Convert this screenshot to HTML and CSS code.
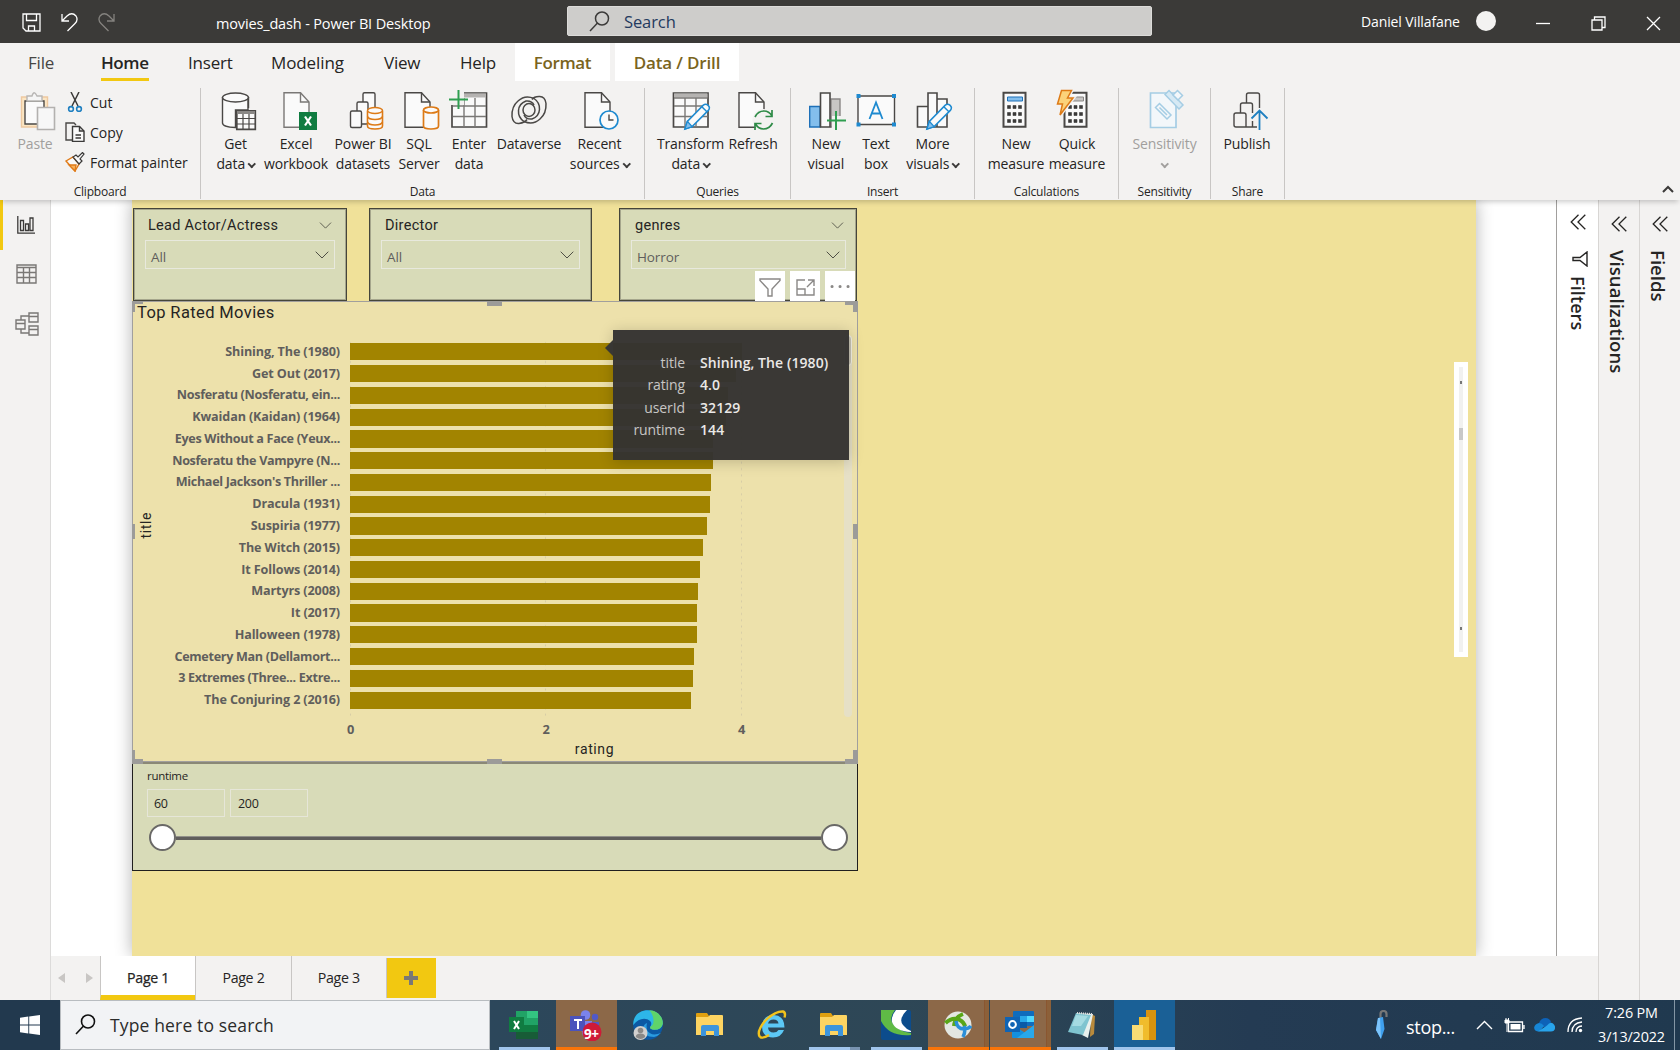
FILE: index.html
```html
<!DOCTYPE html>
<html lang="en">
<head>
<meta charset="utf-8">
<title>movies_dash - Power BI Desktop</title>
<link rel="stylesheet" href="styles.css">
</head>
<body>
<svg class="defs" width="0" height="0">
  <defs>
    <symbol id="doc" viewBox="0 0 48 44"><path d="M1 4.7h16.5l8.5 9.3v25.3H1z" fill="#fafafa"/><path d="M17.5 4.7V14H26" /></symbol>
    <symbol id="pencil" viewBox="0 0 30 30"><path d="M2 28l2.5-8L21 3.200q2.500-2 5 .3t.2 5.200L9.500 25.500z" fill="#fafafa" stroke="#1e8ad0" stroke-width="1.600"/><path d="M2 28l2.500-8 5 5.500z" fill="#83beec" stroke="#1e8ad0" stroke-width="1.300"/><path d="M19.500 5l5.200 5.200" stroke="#1e8ad0" stroke-width="1.500"/></symbol>
    <symbol id="chev" viewBox="0 0 14 8"><path d="M.7.7L7 7 13.300.7" fill="none" stroke="#4f4f45" stroke-width="1"/></symbol>
    <symbol id="dbl" viewBox="0 0 16 16"><path d="M8.500.7L1.200 8l7.300 7.300M15.300.7L8 8l7.300 7.300" fill="none" stroke="#252423" stroke-width="1.300"/></symbol>
    <symbol id="folder" viewBox="0 0 30 26"><path d="M1 2q0-1 1-1h10l2 3h14v19H1z" fill="#e0a010"/><path d="M1 5h12l2-2h12q1 0 1 1v19H1z" fill="#fdd462"/><path d="M6 24V15q0-2 2-2h14q2 0 2 2v9h-5v-5h-8v5z" fill="#3d95dc"/></symbol>
    <symbol id="calc" viewBox="0 0 26 38"><path d="M1.500 1.700h22v34h-22z" fill="#fafafa" stroke="#4a4846" stroke-width="2"/><path d="M5.500 14.500h3v3h-3zm5.500 0h3v3h-3zm5.500 0h3v3h-3zM5.500 21.500h3v3h-3zm5.500 0h3v3h-3zm5.500 0h3v3h-3zM5.500 28.500h3v3h-3zm5.500 0h3v3h-3zm5.500 0h3v3h-3z" fill="#3b3a39" stroke="#3b3a39" stroke-width=".6"/></symbol>
  </defs>
</svg>

<div class="app">
<header class="titlebar">
  <div class="quick">
    <svg width="19" height="19" viewBox="0 0 19 19"><path d="M1 1h17v17H4l-3-3zM4.500 1v6.500h10V1M6.500 18v-5h6v5" /></svg>
    <svg width="17" height="19" viewBox="0 0 17 19"><path d="M1 1v7h7M1.500 7.500L6 3q5-4.500 9 0 2.500 4-1 7.500L6.500 18" /></svg>
    <svg class="off" width="17" height="19" viewBox="0 0 17 19"><path d="M16 1v7H9M15.500 7.500L11 3q-5-4.500-9 0-2.500 4 1 7.500l7.500 7.500" /></svg>
  </div>
  <div class="doc-title">movies_dash - Power BI Desktop</div>
  <div class="search">
    <svg width="21" height="21" viewBox="0 0 21 21"><circle cx="13" cy="7.500" r="6.500"/><path d="M8.500 12L1 20"/></svg>
    <span>Search</span>
  </div>
  <div class="user">Daniel Villafane</div>
  <div class="avatar"></div>
  <div class="window-btns">
    <svg width="15" height="15" viewBox="0 0 15 15"><path d="M0 7.500h14"/></svg>
    <svg width="15" height="15" viewBox="0 0 15 15"><path d="M1 4h10v10H1zM3.500 4V1H14v10.500h-3"/></svg>
    <svg width="15" height="15" viewBox="0 0 15 15"><path d="M1 1l13 13M14 1L1 14"/></svg>
  </div>
</header>

<nav class="tabs">
  <span class="tab file">File</span>
  <span class="tab home">Home</span>
  <span class="tab insert">Insert</span>
  <span class="tab modeling">Modeling</span>
  <span class="tab view">View</span>
  <span class="tab help">Help</span>
  <span class="tab ctx format">Format</span>
  <span class="tab ctx drill">Data / Drill</span>
</nav>

<section class="ribbon">
  <div class="group g-clip">
    <div class="items">
      <div class="cmd paste"><svg viewBox="0 0 48 44"><path d="M10.500 9h26v30h-26z" fill="#fbe6c4" stroke="#eec9a0"/><path d="M14 13h19v23H14z" fill="#fafafa"/><path d="M16 13V8h5q2-6.500 5 0h5v5z" fill="#f5f5f5" stroke="#b8b6b4"/><path d="M26.500 19.500h17v22h-17z" fill="#f7f7f7" stroke="#b3b1af" stroke-width="1.600"/></svg><span>Paste</span></div>
      <div class="clip-list">
        <div><svg viewBox="0 0 20 20"><path d="M6 0l7 14M14 0L7 14" stroke="#3b3a39" stroke-width="1.500"/><g stroke="#1e7fc0" stroke-width="1.600"><circle cx="6" cy="17" r="2.400"/><circle cx="14" cy="17" r="2.400"/></g></svg><span>Cut</span></div>
        <div><svg viewBox="0 0 20 20"><path d="M7 18H1V1h8l2 2" stroke="#4a4846" stroke-width="1.400"/><path d="M7.500 4.500h7l4.500 4.500v10.500H7.500z" fill="#fafafa" stroke="#3b3a39" stroke-width="1.400"/><path d="M14.500 4.500V9H19M10.500 13h5.500M10.500 16h5.500" stroke="#3b3a39"/></svg><span>Copy</span></div>
        <div><svg viewBox="0 0 20 20"><path d="M1 9l7-4 6 7-4 7z" fill="#fafafa" stroke="#e07b18" stroke-width="1.400"/><path d="M4 13l7 0-1 6z" fill="#f9b25c" stroke="#e07b18"/><path d="M8 5l6 7 3-3-2-2 4-5-1.500-1.500L13 5l-2-2z" fill="#fafafa" stroke="#3b3a39" stroke-width="1.200"/></svg><span>Format painter</span></div>
      </div>
    </div>
    <div class="glabel">Clipboard</div>
  </div>

  <div class="group g-data">
    <div class="items">
      <div class="cmd"><svg viewBox="0 0 48 44"><path d="M11.500 9v26q0 4 13 4.500V22H37V9" fill="#fafafa"/><ellipse cx="24.500" cy="9.500" rx="13" ry="4.500" fill="#fafafa"/><path d="M37.500 9v11"/><path d="M25.800 22.800h18.500v18.500H25.800z" fill="#fafafa" stroke-width="1.700"/><path d="M26 24.500h18" stroke="#8a8886" stroke-width="3"/><path d="M26 30.500h18M26 36h18M32 26v15M38 26v15" stroke-width="1.200"/></svg><span>Get<br>data<i class="dd"></i></span></div>
      <div class="cmd"><svg viewBox="0 0 48 44"><use href="#doc" x="11" stroke="#7a7876" width="48" height="44"/><path d="M27 24h18v18H27z" fill="#107c41" stroke="none"/><path d="M33 28.500l6 9M39 28.500l-6 9" stroke="#fff" stroke-width="2.200"/></svg><span>Excel<br>workbook</span></div>
      <div class="cmd"><svg viewBox="0 0 48 44"><rect x="24" y="4.700" width="12" height="30" rx="1.500" fill="#fafafa"/><rect x="18" y="14" width="11" height="22" rx="1.500" fill="#fafafa"/><rect x="11.500" y="23" width="11" height="16.500" rx="1.500" fill="#fafafa"/><g stroke="#dd7a16" stroke-width="1.600" fill="#fafafa"><path d="M28.500 23v15q0 3 7.500 3t7.500-3V23"/><path d="M28.500 28.500q1 3 7.500 3t7.500-3M28.500 34q1 3 7.500 3t7.500-3" fill="none"/><ellipse cx="36" cy="22.500" rx="7.500" ry="3"/></g></svg><span>Power BI<br>datasets</span></div>
      <div class="cmd"><svg viewBox="0 0 48 44"><use href="#doc" x="9" width="48" height="44"/><g stroke="#dd7a16" stroke-width="1.700" fill="#fafafa"><path d="M28.500 22v16q0 3 7.500 3t7.500-3V22"/><ellipse cx="36" cy="22" rx="7.500" ry="3"/></g></svg><span>SQL<br>Server</span></div>
      <div class="cmd"><svg viewBox="0 0 48 44"><path d="M7 5h34.500v34H7z" fill="#fafafa" stroke-width="1.700"/><path d="M8 7.500h33" stroke="#b5b3b1" stroke-width="4"/><path d="M8 18h33M8 28.500h33M19 10v29M30 10v29" stroke="#7a7876" stroke-width="1.400"/><path d="M2 0h17v17H2z" fill="#f3f2f1" stroke="none"/><path d="M13.500 2v19M4 11.500h19" stroke="#2f9e50" stroke-width="2"/></svg><span>Enter<br>data</span></div>
      <div class="cmd"><svg viewBox="0 0 48 44"><g stroke-width="1.500"><path d="M14 35.500q-6 .5-7-7-.5-10 6-15.500 7-6.500 16-2.500 6 4 5.500 11-.5 7-7.500 9.500-6 .5-8-4M34 8.500q6-.5 7 7 .5 10-6 15.500-7 6.500-16 2.500-6-4-5.500-11 .5-7 7.500-9.500 6-.5 8 4"/><ellipse cx="24" cy="22" rx="6" ry="6.500"/><path d="M14 35.500q6-1 8-4M34 8.500q-5 0-7 3"/></g></svg><span>Dataverse</span></div>
      <div class="cmd"><svg viewBox="0 0 48 44"><use href="#doc" x="9" width="48" height="44"/><circle cx="34" cy="32" r="9" fill="#fafafa" stroke="#1e8ad0" stroke-width="1.700"/><path d="M34 26.500V32h4.500"/></svg><span>Recent<br>sources<i class="dd"></i></span></div>
    </div>
    <div class="glabel">Data</div>
  </div>

  <div class="group g-query">
    <div class="items">
      <div class="cmd"><svg viewBox="0 0 48 44"><path d="M7.500 5H42v34H7.500z" fill="#fafafa" stroke-width="1.700"/><path d="M8 7.500h33.500" stroke="#b5b3b1" stroke-width="4"/><path d="M8 10h33.500M8 18h33.500M8 28.500h33.500M19 10v29M30 10v29" stroke="#7a7876" stroke-width="1.400"/><use href="#pencil" x="17" y="14" width="29" height="29"/></svg><span>Transform<br>data<i class="dd"></i></span></div>
      <div class="cmd"><svg viewBox="0 0 48 44"><use href="#doc" x="9" width="48" height="44"/><circle cx="34.500" cy="32" r="11" fill="#f3f2f1" stroke="none"/><path d="M26 29q3-6 9-6 5 0 8 5M43 22v6.500h-6.500M43.500 35q-3 6-9 6-5 0-8-5M26 42v-6.500h6.500" stroke="#2e8b47" stroke-width="1.700"/></svg><span>Refresh</span></div>
    </div>
    <div class="glabel">Queries</div>
  </div>

  <div class="group g-insert">
    <div class="items">
      <div class="cmd"><svg viewBox="0 0 48 44"><path d="M29 11h9v28h-9z" fill="#c8c6c4" stroke="#8a8886"/><path d="M7.700 18.500H18V39H7.700z" fill="#83beec" stroke="#1e70b8"/><path d="M18.500 5H28v34h-9.500z" fill="#fafafa" stroke-width="1.600"/><path d="M30 28h15v13H30z" fill="#f3f2f1" stroke="none"/><path d="M34 23v19M25 32.500h19" stroke="#2f9e50" stroke-width="2"/></svg><span>New<br>visual</span></div>
      <div class="cmd"><svg viewBox="0 0 48 44"><path d="M6 8h36.500v28.500H6z" fill="#fafafa"/><path d="M4.500 6h4v4h-4zm35.500 0h4v4h-4zM4.500 34.500h4v4h-4zm35.500 0h4v4h-4z" fill="#1e8ad0" stroke="none"/><path d="M17.500 31L24 14.500 30.500 31M19.500 25.500h9" stroke="#1e8ad0" stroke-width="1.800"/></svg><span>Text<br>box</span></div>
      <div class="cmd"><svg viewBox="0 0 48 44"><path d="M9.500 18.500H20V39H9.500zM20 5h9v34h-9zM29 11h10v28H29z" fill="#fafafa" stroke-width="1.600"/><use href="#pencil" x="17" y="14" width="29" height="29"/></svg><span>More<br>visuals<i class="dd"></i></span></div>
    </div>
    <div class="glabel">Insert</div>
  </div>

  <div class="group g-calc">
    <div class="items">
      <div class="cmd"><svg viewBox="0 0 48 44"><use href="#calc" x="10" y="3" width="26" height="38"/><path d="M15.500 9h15v4h-15z" fill="#83beec" stroke="#1e70b8" stroke-width="1"/></svg><span>New<br>measure</span></div>
      <div class="cmd"><svg viewBox="0 0 48 44"><use href="#calc" x="10" y="3" width="26" height="38"/><path d="M15.500 9h15v4h-15z" fill="#c8c6c4" stroke="#8a8886" stroke-width="1"/><path d="M8.500 2.500h10l-4 7.500h5.500L7 27l2.500-11H4.500z" fill="#fbd27a" stroke="#f3f2f1" stroke-width="4"/><path d="M8.500 2.500h10l-4 7.500h5.500L7 27l2.500-11H4.500z" fill="#fbd27a" stroke="#dd7a16" stroke-width="1.500"/></svg><span>Quick<br>measure</span></div>
    </div>
    <div class="glabel">Calculations</div>
  </div>

  <div class="group g-sens">
    <div class="items">
      <div class="cmd off"><svg viewBox="0 0 48 44"><g stroke="#a5cde4"><path d="M10.500 5H36v34.500H10.500z" fill="#f3f7fa" stroke-width="1.700"/><path d="M15.500 19.500l4-4L31 27l-4 4zM19.500 19.500l7.500 7.500" fill="#f3f7fa" stroke-width="1.500"/><path d="M25 6.500l4-4L43 17l-4 4z" fill="#d6e9f4" stroke-width="1.500"/><path d="M33 7l4.500-4.500 5 5L38 12z" fill="#f3f7fa" stroke-width="1.500"/></g></svg><span>Sensitivity<br><i class="dd"></i></span></div>
    </div>
    <div class="glabel">Sensitivity</div>
  </div>

  <div class="group g-share">
    <div class="items">
      <div class="cmd"><svg viewBox="0 0 48 44"><path d="M34 39H13q-2 0-2-2V27q0-2 2-2h8q2 0 2 2v12M17.500 25v-8q0-2 2-2h8q2 0 2 2v8M29.500 33v6M23.500 15V7q0-2 2-2h9q2 0 2 2v13"/><path d="M36.500 42V23M28.500 30.500l8-8 8 8" stroke="#1e7fc0" stroke-width="1.800"/></svg><span>Publish</span></div>
    </div>
    <div class="glabel">Share</div>
  </div>
  <svg class="collapse" width="12" height="8" viewBox="0 0 12 8"><path d="M1 7l5-5 5 5"/></svg>
</section>

<main class="work">
  <aside class="views">
    <div class="vw on"><svg width="18" height="18" viewBox="0 0 18 18"><path d="M.8 0v17.200H18M3.500 4.500h3v10h-3zM8.500 8h3v6.500h-3zM13 2h3v12.500h-3z" stroke="#3b3a39" stroke-width="1.300"/></svg></div>
    <div class="vw"><svg width="21" height="20" viewBox="0 0 21 20"><path d="M1 1h19v18H1zM1 3.500h19M1 8.500h19M1 13.500h19M7.500 4v15M13.500 4v15"/></svg></div>
    <div class="vw"><svg width="24" height="24" viewBox="0 0 24 24"><path d="M1 8h9v9H1zM1 11.500h9M14 1h9v9h-9zM14 4.500h9M14 14h9v9h-9zM14 17.500h9M6 8V4h8M6 17v4h8"/></svg></div>
  </aside>

  <div class="center">
    <div class="stage">
      <div class="report">
        <div class="slicers">
          <div class="slicer s1"><div class="shead"><span>Lead Actor/Actress</span><svg width="13" height="7"><use href="#chev"/></svg></div><div class="sbox"><span>All</span><svg width="14" height="8"><use href="#chev"/></svg></div></div>
          <div class="slicer s2"><div class="shead"><span>Director</span></div><div class="sbox"><span>All</span><svg width="14" height="8"><use href="#chev"/></svg></div></div>
          <div class="slicer s3"><div class="shead"><span>genres</span><svg width="13" height="7"><use href="#chev"/></svg></div><div class="sbox"><span>Horror</span><svg width="14" height="8"><use href="#chev"/></svg></div></div>
        </div>

        <div class="chart">
          <div class="visual-actions">
            <span><svg width="22" height="19" viewBox="0 0 22 19"><path d="M1 1h20v1.500L13 11v7H9v-7L1 2.500z"/></svg></span>
            <span><svg width="19" height="17" viewBox="0 0 19 17"><path d="M9 1H1v15h17V9M1 10h8v6M12 1h6v6M18 1l-7 7"/></svg></span>
            <span><svg width="20" height="5" viewBox="0 0 20 5"><path d="M2 1.500h.1M10 1.500h.1M18 1.500h.1" stroke-width="3" stroke-linecap="round"/></svg></span>
          </div>
          <h2>Top Rated Movies</h2>
          <div class="plot">
            <div class="ytitle"><span>title</span></div>
            <div class="rows">
              <div class="row"><span>Shining, The (1980)</span><b style="--v:4.01"></b></div>
              <div class="row"><span>Get Out (2017)</span><b style="--v:3.950"></b></div>
              <div class="row"><span class="cut">Nosferatu (Nosferatu, ein...</span><b style="--v:3.870"></b></div>
              <div class="row"><span>Kwaidan (Kaidan) (1964)</span><b style="--v:3.850"></b></div>
              <div class="row"><span class="cut">Eyes Without a Face (Yeux...</span><b style="--v:3.718"></b></div>
              <div class="row"><span class="cut">Nosferatu the Vampyre (N...</span><b style="--v:3.713"></b></div>
              <div class="row"><span class="cut">Michael Jackson's Thriller ...</span><b style="--v:3.695"></b></div>
              <div class="row"><span>Dracula (1931)</span><b style="--v:3.686"></b></div>
              <div class="row"><span>Suspiria (1977)</span><b style="--v:3.654"></b></div>
              <div class="row"><span>The Witch (2015)</span><b style="--v:3.613"></b></div>
              <div class="row"><span>It Follows (2014)</span><b style="--v:3.582"></b></div>
              <div class="row"><span>Martyrs (2008)</span><b style="--v:3.562"></b></div>
              <div class="row"><span>It (2017)</span><b style="--v:3.554"></b></div>
              <div class="row"><span>Halloween (1978)</span><b style="--v:3.548"></b></div>
              <div class="row"><span class="cut">Cemetery Man (Dellamort...</span><b style="--v:3.519"></b></div>
              <div class="row"><span class="cut">3 Extremes (Three... Extre...</span><b style="--v:3.510"></b></div>
              <div class="row"><span>The Conjuring 2 (2016)</span><b style="--v:3.495"></b></div>
            </div>
            <div class="scroll"><i></i></div>
          </div>
          <div class="axis"><span>0</span><span>2</span><span>4</span></div>
          <div class="xtitle">rating</div>
          <i class="h tl"></i><i class="h tc"></i><i class="h tr"></i><i class="h ml"></i><i class="h mr"></i><i class="h bl"></i><i class="h bc"></i><i class="h br"></i>
          <div class="tooltip">
            <span>title</span><b>Shining, The (1980)</b>
            <span>rating</span><b>4.0</b>
            <span>userId</span><b>32129</b>
            <span>runtime</span><b>144</b>
          </div>
        </div>

        <div class="range">
          <div class="rlabel">runtime</div>
          <div class="rinputs"><span>60</span><span>200</span></div>
          <div class="track"><i></i><u></u><i></i></div>
        </div>
        <div class="sliver"><div><s></s><b></b><s></s></div></div>
      </div>
    </div>
  </div>

  <aside class="pane filters"><svg width="16" height="16"><use href="#dbl"/></svg><svg class="funnel" width="16" height="16" viewBox="0 0 16 16"><path d="M15 1v14L8 9.500H1v-3h7z"/></svg><span>Filters</span></aside>
  <aside class="pane vis"><svg width="16" height="16"><use href="#dbl"/></svg><span>Visualizations</span></aside>
  <aside class="pane fields"><svg width="16" height="16"><use href="#dbl"/></svg><span>Fields</span></aside>

  <div class="pages">
    <div class="arrows"><svg width="7" height="10" viewBox="0 0 7 10"><path d="M7 0v10L0 5z"/></svg><svg width="7" height="10" viewBox="0 0 7 10"><path d="M0 0v10l7-5z"/></svg></div>
    <div class="pg on">Page 1</div><div class="pg">Page 2</div><div class="pg">Page 3</div>
    <div class="add"><svg width="14" height="14" viewBox="0 0 14 14"><path d="M7 0v14M0 7h14"/></svg></div>
  </div>
</main>

<footer class="taskbar">
  <div class="start"><svg width="20" height="20" viewBox="0 0 20 20"><path d="M0 2.800L8.300 1.600v7.900H0zM9.200 1.400L20 0v9.500H9.200zM0 10.500h8.300v7.900L0 17.200zM9.200 10.500H20V20L9.200 18.600z" fill="#fff"/></svg></div>
  <div class="tsearch"><svg width="21" height="21" viewBox="0 0 21 21"><circle cx="13" cy="7.500" r="6.500"/><path d="M8.500 12L1 20"/></svg><span>Type here to search</span></div>
  <div class="apps">
    <div class="appi run"><svg width="30" height="30" viewBox="0 0 30 30"><path d="M7 1h22v28H7z" fill="#185c37"/><path d="M7 1h11v7H7z" fill="#21a366"/><path d="M18 1h11v7H18z" fill="#33c481"/><path d="M7 8h22v7H7z" fill="#21a366"/><path d="M7 15h22v7H7z" fill="#107c41"/><path d="M0 7h15v15H0z" fill="#107c41"/><path d="M5 11l5 8M10 11l-5 8" stroke="#fff" stroke-width="2"/></svg></div>
    <div class="appi alert"><svg width="32" height="32" viewBox="0 0 32 32"><circle cx="15.500" cy="6" r="4.800" fill="#7b83eb"/><circle cx="25" cy="8" r="3.200" fill="#5059c9"/><path d="M15 13h14v8q-3 4-8 3z" fill="#5059c9"/><path d="M9 12h13v10q-2 6-9 5z" fill="#7b83eb"/><path d="M0 7h15v15H0z" fill="#4b53bc"/><path d="M4 11h8M8 11v9" stroke="#fff" stroke-width="2"/><circle cx="22" cy="23" r="9.500" fill="#cf1a38"/></svg><em>9+</em></div>
    <div class="appi"><svg width="32" height="32" viewBox="0 0 32 32"><circle cx="16" cy="16" r="14.800" fill="#0c59a4"/><path d="M1.200 16C1 6 8 1.200 16 1.200c9 0 15 6 14.800 13.500q-1 6-8.500 6-5 0-4-3 3-5-3-7.500-8-2-14 5.800z" fill="#2db6e8"/><path d="M17 1.200c8 0 14 6 13.800 13.500q-1 6-8.500 6-5 0-4-3 4-2 3-8T17 1.200z" fill="#5fd46a"/><path d="M11 19q0 9 11 9 4-1 7-4-10 4-14-3-1-4 0-7-3 1-4 5z" fill="#2a9be0"/><circle cx="8.500" cy="24" r="7" fill="#d2d0ce"/><circle cx="8.500" cy="21.500" r="2.800" fill="#8a8886"/><path d="M3.800 28q0-3.500 4.700-3.500T13.200 28q-4.500 4-9.400 0z" fill="#8a8886"/></svg></div>
    <div class="appi"><svg width="30" height="26"><use href="#folder"/></svg></div>
    <div class="appi"><svg width="30" height="30" viewBox="0 0 30 30"><path d="M27.500 17.500H11q.5 5 5.500 5 3.500 0 5-2.500h5.500q-3 7.500-11 7.500Q5 27 5 16.500 5.500 5.500 16.500 5q11 .5 11 12.500zM11 13.500h10.500q-.5-4-5-4t-5.500 4z" fill="#5cc8f5"/><path d="M3 27Q-1 22 8 11 18 1 26 1.500q3 1 1.500 6M3 27q3 2 9-2" fill="none" stroke="#f2c31c" stroke-width="2.400"/></svg></div>
    <div class="appi run split"><svg width="30" height="26"><use href="#folder"/></svg></div>
    <div class="appi run"><svg width="30" height="30" viewBox="0 0 30 30"><rect width="30" height="30" rx="2" fill="#0c4c8c"/><path d="M0 0h14Q6 10 15 17q6 5 15 6v2Q8 27 0 11z" fill="#5fba46"/><path d="M15 0h11Q17 9 22 15q3 4 8 6v1Q14 21 11 12q-1-6 4-12z" fill="#fff"/></svg></div>
    <div class="appi alert multi"><svg width="28" height="28" viewBox="0 0 28 28"><circle cx="14" cy="14" r="13.500" fill="#e3e7e2"/><path d="M1.500 12Q8 6 15 8.500q5 2.500 6 7M10 15Q11 6 19 3" fill="none" stroke="#58a618" stroke-width="4"/><path d="M12 10q1 8 8 8 5-.5 7-3M20 15q2 5-1 11" fill="none" stroke="#2a8fd8" stroke-width="3.500"/></svg></div>
    <div class="appi alert multi"><svg width="30" height="28" viewBox="0 0 30 28"><path d="M8 1q0-1 1-1h19q1 0 1 1v14H8z" fill="#0f6cbd"/><path d="M15 5h7v6h-7z" fill="#28a8ea"/><path d="M22 5h7v6h-7z" fill="#50d9ff"/><path d="M8 11h14v6H8z" fill="#0a5aa6"/><path d="M7 14l22 13H8q-1 0-1-1z" fill="#1490df"/><path d="M29 14L12 27h17z" fill="#28a8ea"/><path d="M0 6h15v15H0z" fill="#0f64b5"/><circle cx="7.500" cy="13.500" r="3.400" fill="none" stroke="#fff" stroke-width="2"/></svg></div>
    <div class="appi run"><svg width="30" height="28" viewBox="0 0 30 28"><path d="M24 3l4 2-1 18-4 3z" fill="#b98a3c"/><path d="M9 2l17 1-5 24-6-3z" fill="#e8f0ee"/><path d="M9 2l15 2-8 20-15-3z" fill="#7fc4d0"/><path d="M9 4l12 1-7 10H5z" fill="#a5dbe2"/><path d="M10 2l15 1" stroke="#ddd" stroke-width="2" stroke-dasharray="1 1"/></svg></div>
    <div class="appi pbi"><svg width="24" height="30" viewBox="0 0 24 30"><path d="M14 0h10v30H14z" fill="#d8930f"/><path d="M7 7h10v23H7z" fill="#f0bc2c"/><path d="M0 15h11v15H0z" fill="#f8dc74"/></svg></div>
  </div>
  <div class="tray">
    <svg class="umb" width="12" height="30" viewBox="0 0 12 30"><path d="M4.500 9V4q0-3 3-3t3 3v3" fill="none" stroke="#777" stroke-width="2.200"/><path d="M2 8l5-1 1.500 12L5 29 0 20z" fill="#3fa0ee"/><path d="M2 8l2 0 1 21-5-9z" fill="#7cc4fb"/></svg>
    <span class="stop">stop...</span>
    <svg class="up" width="17" height="10" viewBox="0 0 17 10"><path d="M1 9l7.500-7.500L16 9" fill="none" stroke="#fff" stroke-width="1.400"/></svg>
    <svg class="bat" width="21" height="15" viewBox="0 0 21 15"><path d="M4.500 4h14v9.500h-14zM20 7v4" fill="none" stroke="#fff" stroke-width="1.300"/><path d="M6.500 6h10v5.500h-10z" fill="#fff"/><path d="M1 2h4v3H1zM2 0v2M4.500 0v2M3 5v9" fill="#fff" stroke="#fff"/></svg>
    <svg class="cloud" width="21" height="14" viewBox="0 0 21 14"><path d="M5 5q2-5 6.500-5 4 0 5.500 4l-2 4-10 2z" fill="#0d62b8"/><path d="M4 13.500Q0 13 .2 9.500.5 6 5 5q3 0 5 3l-4 5z" fill="#1686d6"/><path d="M4 13.500l9-6q3-4 6-2 2.500 2 2 5-.5 3-4 3z" fill="#28a4ec"/></svg>
    <svg class="wifi" width="16" height="16" viewBox="0 0 16 16"><path d="M1 15Q1 2 15 1M5 15Q5 6 15 5M9 15q0-5.500 6-6" fill="none" stroke="#fff" stroke-width="1.300"/><circle cx="13.500" cy="13.500" r="1.700" fill="#fff"/></svg>
    <div class="clock"><span>7:26 PM</span><span>3/13/2022</span></div>
  </div>
</footer>
</div>
</body>
</html>
```
FILE: styles.css
```css
* { box-sizing: border-box; }
body { margin: 0; width: 1680px; height: 1050px; overflow: hidden; font-family: "Open Sans", "Noto Sans", sans-serif; color: #252423; }
.defs { position: absolute; }
.app { display: flex; flex-direction: column; width: 1680px; height: 1050px; }
svg { flex: none; display: block; }

/* title bar */
.titlebar { height: 43px; background: #3b3a38; display: flex; align-items: center; color: #fff; font-size: 14px; white-space: nowrap; }
.titlebar svg { fill: none; stroke: #fff; stroke-width: 1.3; }
.quick { display: flex; gap: 20px; padding-left: 22px; width: 216px; padding-top: 2px; }
.quick .off { stroke: #85837f; }
.doc-title { width: 351px; padding-top: 3px; font-size: 14.500px; letter-spacing: -.15px; }
.search { width: 585px; height: 30px; margin-top: -1px; background: #cecdcb; border: 1px solid #dcdbd9; border-radius: 2px; display: flex; align-items: center; padding-left: 21px; gap: 14px; color: #243a5e; font-size: 16.500px; letter-spacing: -.1px; }
.search svg { stroke: #3b3a39; stroke-width: 1.5; }
.user { margin-left: 209px; width: 115px; letter-spacing: -.12px; }
.avatar { width: 20px; height: 20px; border-radius: 50%; background: #f3f2f1; margin-top: -1px; }
.window-btns { display: flex; gap: 40px; margin-left: 40px; padding-top: 3px; }

/* ribbon tabs */
.tabs { height: 38px; background: #f3f2f1; display: flex; font-size: 17px; letter-spacing: -.2px; line-height: 39px; white-space: nowrap; }
.tab { display: block; }
.file { margin-left: 28px; width: 73px; color: #484644; }
.home { width: 48px; font-weight: 600; border-bottom: 3px solid #f2c811; letter-spacing: -.4px; margin-right: 39px; }
.insert { width: 83px; }
.modeling { width: 113px; letter-spacing: -.1px; }
.view { width: 76px; }
.help { width: 55px; }
.ctx { background: #fff; color: #7a6420; font-weight: 600; text-align: center; letter-spacing: -.35px; }
.format { width: 95px; margin-right: 5px; }
.drill { width: 124px; letter-spacing: -.15px; }

/* ribbon */
.ribbon { height: 119px; background: #f3f2f1; display: flex; padding-top: 7px; font-size: 14px; position: relative; z-index: 3; box-shadow: 0 4px 5px -2px rgba(0,0,0,.2); }
.group { height: 111px; border-right: 1px solid #c8c6c4; display: flex; flex-direction: column; justify-content: space-between; }
.items { display: flex; white-space: nowrap; }
.g-clip { width: 201px; } .g-data { width: 444px; } .g-query { width: 146px; } .g-insert { width: 184px; } .g-calc { width: 144px; } .g-sens { width: 92px; } .g-share { width: 74px; }
.glabel { text-align: center; font-size: 12px; line-height: 14px; letter-spacing: -.2px; }
.cmd { display: flex; flex-direction: column; align-items: center; line-height: 20px; text-align: center; letter-spacing: -.12px; }
.cmd svg, .clip-list svg { fill: none; stroke: #4a4846; stroke-width: 1.4; }
.cmd > svg { width: 48px; height: 44px; margin-bottom: 2px; }
.dd { display: inline-block; width: 5.500px; height: 5.500px; border: solid #3b3a39; border-width: 0 2px 2px 0; transform: rotate(45deg); margin: 0 0 3px 4px; }
.cmd:has(.dd) > span { margin-right: -1px; }
.g-data .items { padding-left: 3px; }
.g-data .cmd:nth-child(1) { width: 62px; } .g-data .cmd:nth-child(2) { width: 60px; } .g-data .cmd:nth-child(3) { width: 74px; } .g-data .cmd:nth-child(4) { width: 38px; } .g-data .cmd:nth-child(5) { width: 62px; } .g-data .cmd:nth-child(6) { width: 58px; } .g-data .cmd:nth-child(7) { width: 82px; }
.g-query .items { padding-left: 10px; }
.g-query .cmd:nth-child(1) { width: 70px; } .g-query .cmd:nth-child(2) { width: 56px; }
.g-insert .items { padding-left: 8px; }
.g-insert .cmd:nth-child(1) { width: 54px; } .g-insert .cmd:nth-child(2) { width: 46px; } .g-insert .cmd:nth-child(3) { width: 66px; }
.g-calc .items { padding-left: 11px; }
.g-calc .cmd:nth-child(1) { width: 60px; } .g-calc .cmd:nth-child(2) { width: 62px; }
.g-sens .cmd { width: 90px; } .g-share .cmd { width: 72px; }
.g-clip .paste { width: 48px; margin-left: 11px; color: #a19f9d; }
.cmd.off { color: #a19f9d; } .off .dd { border-color: #a19f9d; margin-left: 0; }
.clip-list { padding-left: 6px; letter-spacing: 0; margin-top: -1px; }
.clip-list > div { height: 30px; display: flex; align-items: center; gap: 5px; }
.clip-list svg { width: 20px; height: 20px; }
.collapse { margin: 97px 6px 0 auto; fill: none; stroke: #3b3a39; stroke-width: 2; }

/* work area */
.work { height: 800px; display: grid; grid-template-columns: 51px 1505px 42px 41px 41px; grid-template-rows: 756px 44px; }
.views { grid-column: 1; grid-row: 1 / 3; background: #f3f2f1; border-right: 1px solid #dcdbda; }
.vw { height: 50px; display: flex; align-items: center; justify-content: center; }
.vw svg { fill: none; stroke: #7a7876; stroke-width: 1.4; }
.vw.on { border-left: 3px solid #f2c811; padding-right: 1px; }
.vw + .vw { padding: 0 0 2px 3px; }
.center { grid-column: 2; grid-row: 1; background: #fff; overflow: hidden; }
.stage { padding-left: 81px; }
.report { width: 1344px; height: 756px; background: #f0e199; padding-top: 8px; box-shadow: 0 0 16px rgba(0,0,0,.3); display: grid; grid-template-columns: 726px auto; grid-template-rows: 93px 461px 109px; }

.slicers { grid-column: 1; grid-row: 1; display: flex; padding-left: 1px; }
.slicer { height: 93px; background: #d8dbb8; border: 1px solid #45453a; box-shadow: inset 0 0 0 1px #a5a68c; padding: 7px 12px 0 11px; }
.s1 { width: 214px; margin-right: 22px; } .s2 { width: 223px; margin-right: 27px; } .s3 { width: 238px; padding-right: 10px; }
.s2 { padding-right: 11px; }
.s1 .sbox { width: 190px; }
.shead { height: 24px; display: flex; justify-content: space-between; align-items: center; font: 14.500px Roboto, sans-serif; letter-spacing: .28px; padding: 0 2px 6px 3px; }
.s2 .shead, .s3 .shead { padding-left: 4px; }
.sbox { height: 29px; border: 1px solid #e8e9dd; display: flex; justify-content: space-between; align-items: center; padding: 4px 5px 0 5px; font-size: 13.500px; color: #605e5c; letter-spacing: -.1px; }
.sbox svg { margin-bottom: 3px; }

.chart { grid-column: 1; grid-row: 2; position: relative; background: #ede1ab; border: 1px solid #a19f9d; height: 461px; }
.chart h2 { margin: 0 0 0 4px; font: 16.500px/21px Roboto, sans-serif; letter-spacing: .38px; height: 19px; }
.visual-actions { position: absolute; right: 2px; top: -31px; display: flex; gap: 5px; }
.visual-actions span { width: 30px; height: 30px; background: #fff; display: flex; align-items: center; justify-content: center; padding-top: 3px; }
.visual-actions svg { fill: none; stroke: #8a8886; stroke-width: 1.400; }
.plot { display: flex; height: 396px; }
.ytitle { width: 24px; display: flex; justify-content: center; align-items: center; padding: 13px 0 0 2px; }
.ytitle span { writing-mode: vertical-rl; transform: rotate(180deg); font: 14px Roboto, sans-serif; letter-spacing: .6px; }
.rows { width: 687px; margin-top: 19px; height: 377px; background:
  radial-gradient(circle, #d5cba6 .8px, transparent 1px) 190.500px 0 / 5px 6.300px repeat-y,
  radial-gradient(circle, #d5cba6 .8px, transparent 1px) 386px 0 / 5px 6.300px repeat-y,
  radial-gradient(circle, #d5cba6 .8px, transparent 1px) 581.500px 0 / 5px 6.300px repeat-y; }
.row { height: 21.775px; display: flex; align-items: center; font-size: 12.600px; font-weight: 700; color: #605e5c; letter-spacing: -.12px; }
.row .cut { letter-spacing: -.32px; }
.rows .row:first-child { margin-top: 1px; }
.row span { width: 183px; text-align: right; margin-right: 10px; white-space: nowrap; line-height: 16px; display: flex; justify-content: flex-end; }
.row b { height: 17.200px; width: calc(var(--v) * 97.700px); background: #a28400; }
.scroll { width: 8px; height: 382px; margin-top: 14px; background: #e6e0c6; border-radius: 4px; }
.scroll i { display: block; height: 31px; background: #c8c4b4; border: 1px solid #f4f1e4; border-radius: 4px; }
.axis { display: grid; grid-template-columns: repeat(3, 195.500px); padding-left: 120px; font: 700 12.800px/16px "Open Sans", sans-serif; color: #605e5c; text-align: center; margin-top: 4px; }
.xtitle { font: 14px/18px Roboto, sans-serif; letter-spacing: .6px; text-align: center; padding: 3px 0 0 200px; width: 723px; }
.h { position: absolute; z-index: 1; width: 15px; height: 5px; background: #9c9b99; }
.tl, .tr, .bl, .br { width: 11px; height: 11px; background: none; border: 0 solid #9c9b99; }
.tl { left: -1px; top: -1px; border-width: 3px 0 0 3px; } .tr { right: -1px; top: -1px; border-width: 4px 5px 0 0; width: 13px; }
.bl { left: -1px; bottom: -3px; border-width: 0 0 5px 3px; height: 14px; } .br { right: -1px; bottom: -3px; border-width: 0 5px 5px 0; height: 14px; width: 13px; }
.tc { left: 354px; top: -1px; } .bc { left: 354px; bottom: -3px; }
.ml, .mr { width: 3px; height: 15px; top: 222px; } .ml { left: -1px; } .mr { right: -1px; width: 5px; }

.tooltip { position: absolute; z-index: 2; left: 480px; top: 28px; width: 236px; height: 130px; background: rgba(52,51,49,.97); box-shadow: 0 2px 14px rgba(0,0,0,.2); color: #c8c6c4; display: grid; grid-template-columns: 72px auto; column-gap: 15px; grid-auto-rows: 22.400px; padding-top: 22px; line-height: 22px; font-size: 14px; letter-spacing: -.1px; white-space: nowrap; }
.tooltip span { text-align: right; } .tooltip b { color: #ebe9e7; font-weight: 600; letter-spacing: .08px; }
.tooltip::before { content: ""; position: absolute; left: -8px; top: 10px; border: solid transparent; border-width: 8px 8px 8px 0; border-right-color: #383734; }

.range { grid-column: 1; grid-row: 3; background: #d8dbb8; border: 1px solid #201f1e; border-top: 2px solid #8a8876; padding: 4px 9px 0 14px; height: 109px; }
.rlabel { font-size: 11.500px; line-height: 15px; letter-spacing: -.3px; }
.rinputs { display: flex; gap: 5px; margin-top: 6px; }
.rinputs span { width: 78px; height: 28px; border: 1px solid #e6e6d8; padding-left: 6px; line-height: 27px; font-size: 12.500px; letter-spacing: -.3px; }
.rinputs span:last-child { padding-left: 7px; }
.track { display: flex; align-items: center; margin-top: 7px; padding: 0 0 0 2px; }
.track i { width: 27px; height: 27px; border-radius: 50%; background: #fff; border: 2px solid #6a6967; }
.track u { flex: 1; height: 4px; background: #605e5c; border-top: 1px solid #92918a; }
.sliver { grid-column: 2; grid-row: 1 / 4; padding: 154px 0 0 596px; }
.sliver div { width: 14px; height: 295px; border: 5px solid #fff; background: #f1f1f0; display: flex; flex-direction: column; justify-content: space-between; align-items: center; padding: 14px 0 22px; }
.sliver s { width: 2px; height: 3px; background: #777; }
.sliver b { width: 4px; height: 12px; background: #c8c8c8; margin-bottom: 143px; }

.pane { display: flex; flex-direction: column; align-items: center; border-left: 1px solid #d8d6d4; background: #f3f2f1; padding-top: 16px; font-size: 18.500px; font-weight: 600; letter-spacing: .05px; grid-row: 1 / 3; }
.vis { grid-column: 4; } .fields { grid-column: 5; }
.pane span { writing-mode: vertical-rl; line-height: 24px; margin-top: 18px; margin-right: 4px; }
.filters { background: #fff; border-left-color: #a19f9d; padding-top: 14px; grid-row: 1; grid-column: 3; }
.pane.filters span { margin: 9px 0 0; font-size: 18px; letter-spacing: .1px; }
.funnel { margin: 21px 0 0 5px; fill: none; stroke: #252423; stroke-width: 1.400; }

.pages { grid-column: 2 / 4; grid-row: 2; background: #f3f2f1; display: flex; }
.pg { width: 95.300px; border-left: 1px solid #c8c6c4; text-align: center; line-height: 43px; font-size: 14.200px; letter-spacing: -.3px; }
.pg.on { background: #fff; border-bottom: 5px solid #f2c811; -webkit-text-stroke: .25px #252423; }
.arrows { width: 49px; display: flex; gap: 21px; align-items: center; padding-left: 7px; }
.arrows path { fill: #c8c6c4; }
.add { width: 50px; height: 40px; margin-top: 2px; background: #f2c811; border-left: 1px solid #c8c6c4; display: flex; align-items: center; justify-content: center; }
.add svg { stroke: #7a7876; stroke-width: 4; }

/* taskbar */
.taskbar { height: 50px; background: linear-gradient(90deg, #22394e 0, #22394e 60px, #2c475b 490px, #2e4756 900px, #2a4355 1050px, #243b53 1250px, #20394f 1680px); display: flex; }
.start { width: 60px; flex: none; display: flex; align-items: center; justify-content: center; }
.tsearch { width: 430px; flex: none; background: #f2f3f5; border: 1px solid #b8bcc0; display: flex; align-items: center; padding-left: 14px; gap: 14px; font-size: 17.500px; color: #2b2b2b; letter-spacing: .15px; white-space: nowrap; }
.tsearch svg { fill: none; stroke: #111; stroke-width: 1.600; margin-bottom: 1px; }
.apps { display: flex; flex: none; padding-left: 4px; }
.appi { width: 61px; height: 50px; margin-right: 1px; padding-right: 2px; display: flex; align-items: center; justify-content: center; position: relative; }
.run { background: linear-gradient(#a0c5ec, #a0c5ec) center bottom / 51px 3px no-repeat; }
.split { background: linear-gradient(90deg, #a0c5ec 41px, #7893b0 41px) center bottom / 51px 3px no-repeat; }
.alert { background: #8c6848; border-bottom: 3px solid #f97408; padding-top: 3px; }
.multi { background: linear-gradient(90deg, #8c6848 56px, #8a5630 56px, #8a5630 57px, #8c6039 57px); }
.pbi { background: #1a6096; border-bottom: 3px solid #a0c5ec; padding-top: 3px; }
.appi em { position: absolute; left: 28px; top: 25px; font: 700 13.500px/18px "Open Sans", sans-serif; color: #fff; letter-spacing: -.5px; }
.tray { flex: 1; display: flex; align-items: center; color: #fff; padding-left: 200px; white-space: nowrap; }
.stop { margin-left: 18px; width: 70px; font-size: 18px; letter-spacing: -.3px; padding-top: 3px; }
.bat { margin-left: 11px; } .cloud { margin-left: 9px; } .wifi { margin-left: 12px; }
.clock { margin-left: auto; width: 86px; margin-right: 5px; height: 50px; border-right: 1px solid #8496a4; display: flex; flex-direction: column; text-align: center; font-size: 14.400px; line-height: 24px; letter-spacing: -.15px; padding-top: 1px; }
```
